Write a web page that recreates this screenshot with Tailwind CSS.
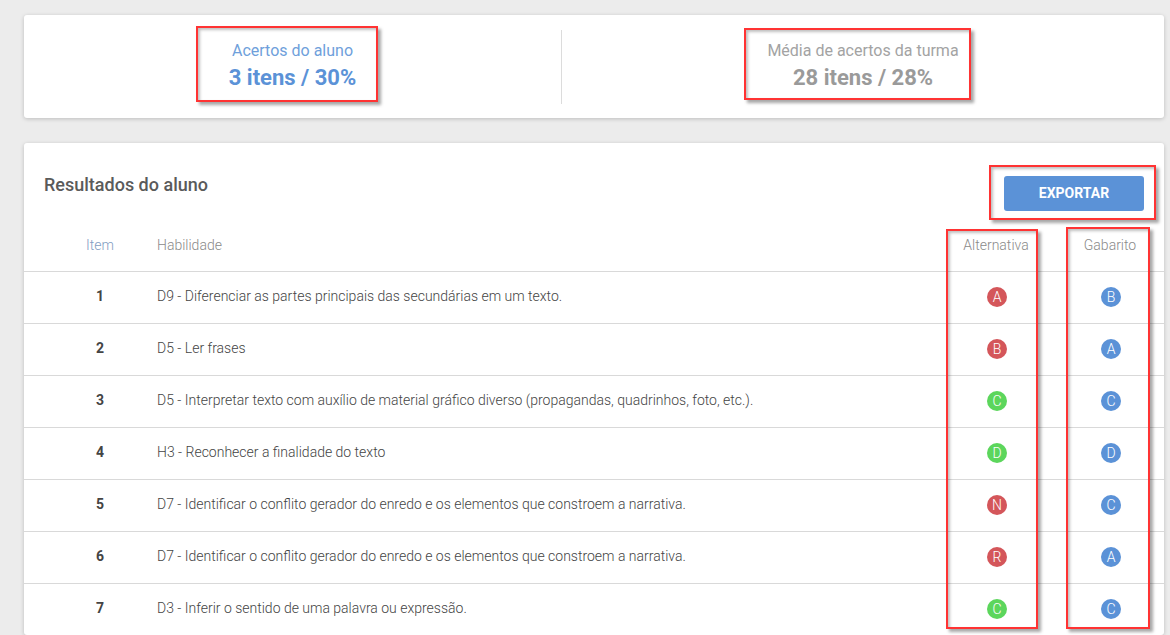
<!DOCTYPE html>
<html lang="pt">
<head>
<meta charset="utf-8">
<script src="https://cdn.jsdelivr.net/npm/@tailwindcss/browser@4"></script>
</head>
<body class="bg-[#ececec] font-['Roboto',sans-serif] h-[635px] overflow-hidden relative">
<div class="pt-[15px] pl-[24px] pr-[6px]">
  <section class="bg-white rounded-[3px] shadow-[0_1px_4px_rgba(0,0,0,0.2)] h-[103px] flex items-center">
    <div class="w-[537px] flex flex-col items-center text-[#5b92d7]">
      <p class="text-[16px] leading-[20px] text-[#6f9fdb]">Acertos do aluno</p>
      <p class="text-[22px] leading-[30px] font-bold mt-[2px]">3 itens / 30%</p>
    </div>
    <div class="w-px h-[74px] bg-[#dcdcdc]"></div>
    <div class="w-[602px] flex flex-col items-center text-[#9a9a9a]">
      <p class="text-[16px] leading-[20px] text-[#a3a3a3]">Média de acertos da turma</p>
      <p class="text-[22px] leading-[30px] font-bold mt-[2px]">28 itens / 28%</p>
    </div>
  </section>
  <section class="bg-white rounded-[3px] shadow-[0_1px_4px_rgba(0,0,0,0.2)] mt-[25px] h-[492px] overflow-hidden">
    <div class="h-[83px] flex justify-between pl-[20px] pr-[20px]">
      <h2 class="text-[18px] leading-[24px] font-medium text-[#5a5a5a] mt-[30px]">Resultados do aluno</h2>
      <button class="w-[140px] h-[35px] mt-[33px] bg-[#5b92d7] rounded-[3px] text-white text-[14px] font-bold">EXPORTAR</button>
    </div>
    <div class="grid grid-cols-[133px_1fr_114px_108px] h-[46px] pb-[7px] items-center text-[14px] font-light text-[#8a8a8a] border-b border-[#d9d9d9]">
      <span class="pl-[19px] text-center text-[#7f9dc2]">Item</span>
      <span>Habilidade</span>
      <span class="pr-[6px] text-center">Alternativa</span>
      <span class="text-center">Gabarito</span>
    </div>
    <div class="grid grid-cols-[133px_1fr_114px_108px] h-[52px] pb-[1px] items-center text-[14px] font-light text-[#444] border-b border-[#d9d9d9]">
      <span class="pl-[19px] pb-[2px] text-center font-bold">1</span>
      <span class="pb-[2px]">D9 - Diferenciar as partes principais das secundárias em um texto.</span>
      <span class="pl-[2px] pr-[6px] flex justify-center"><span class="size-5 rounded-full bg-[#d4565a] text-white flex items-center justify-center">A</span></span>
      <span class="pl-[2px] flex justify-center"><span class="size-5 rounded-full bg-[#5b92d7] text-white flex items-center justify-center">B</span></span>
    </div>
    <div class="grid grid-cols-[133px_1fr_114px_108px] h-[52px] pb-[1px] items-center text-[14px] font-light text-[#444] border-b border-[#d9d9d9]">
      <span class="pl-[19px] pb-[2px] text-center font-bold">2</span>
      <span class="pb-[2px]">D5 - Ler frases</span>
      <span class="pl-[2px] pr-[6px] flex justify-center"><span class="size-5 rounded-full bg-[#d4565a] text-white flex items-center justify-center">B</span></span>
      <span class="pl-[2px] flex justify-center"><span class="size-5 rounded-full bg-[#5b92d7] text-white flex items-center justify-center">A</span></span>
    </div>
    <div class="grid grid-cols-[133px_1fr_114px_108px] h-[52px] pb-[1px] items-center text-[14px] font-light text-[#444] border-b border-[#d9d9d9]">
      <span class="pl-[19px] pb-[2px] text-center font-bold">3</span>
      <span class="pb-[2px]">D5 - Interpretar texto com auxílio de material gráfico diverso (propagandas, quadrinhos, foto, etc.).</span>
      <span class="pl-[2px] pr-[6px] flex justify-center"><span class="size-5 rounded-full bg-[#5cd65c] text-white flex items-center justify-center">C</span></span>
      <span class="pl-[2px] flex justify-center"><span class="size-5 rounded-full bg-[#5b92d7] text-white flex items-center justify-center">C</span></span>
    </div>
    <div class="grid grid-cols-[133px_1fr_114px_108px] h-[52px] pb-[1px] items-center text-[14px] font-light text-[#444] border-b border-[#d9d9d9]">
      <span class="pl-[19px] pb-[2px] text-center font-bold">4</span>
      <span class="pb-[2px]">H3 - Reconhecer a finalidade do texto</span>
      <span class="pl-[2px] pr-[6px] flex justify-center"><span class="size-5 rounded-full bg-[#5cd65c] text-white flex items-center justify-center">D</span></span>
      <span class="pl-[2px] flex justify-center"><span class="size-5 rounded-full bg-[#5b92d7] text-white flex items-center justify-center">D</span></span>
    </div>
    <div class="grid grid-cols-[133px_1fr_114px_108px] h-[52px] pb-[1px] items-center text-[14px] font-light text-[#444] border-b border-[#d9d9d9]">
      <span class="pl-[19px] pb-[2px] text-center font-bold">5</span>
      <span class="pb-[2px]">D7 - Identificar o conflito gerador do enredo e os elementos que constroem a narrativa.</span>
      <span class="pl-[2px] pr-[6px] flex justify-center"><span class="size-5 rounded-full bg-[#d4565a] text-white flex items-center justify-center">N</span></span>
      <span class="pl-[2px] flex justify-center"><span class="size-5 rounded-full bg-[#5b92d7] text-white flex items-center justify-center">C</span></span>
    </div>
    <div class="grid grid-cols-[133px_1fr_114px_108px] h-[52px] pb-[1px] items-center text-[14px] font-light text-[#444] border-b border-[#d9d9d9]">
      <span class="pl-[19px] pb-[2px] text-center font-bold">6</span>
      <span class="pb-[2px]">D7 - Identificar o conflito gerador do enredo e os elementos que constroem a narrativa.</span>
      <span class="pl-[2px] pr-[6px] flex justify-center"><span class="size-5 rounded-full bg-[#d4565a] text-white flex items-center justify-center">R</span></span>
      <span class="pl-[2px] flex justify-center"><span class="size-5 rounded-full bg-[#5b92d7] text-white flex items-center justify-center">A</span></span>
    </div>
    <div class="grid grid-cols-[133px_1fr_114px_108px] h-[52px] pb-[1px] items-center text-[14px] font-light text-[#444] border-b border-[#d9d9d9]">
      <span class="pl-[19px] pb-[2px] text-center font-bold">7</span>
      <span class="pb-[2px]">D3 - Inferir o sentido de uma palavra ou expressão.</span>
      <span class="pl-[2px] pr-[6px] flex justify-center"><span class="size-5 rounded-full bg-[#5cd65c] text-white flex items-center justify-center">C</span></span>
      <span class="pl-[2px] flex justify-center"><span class="size-5 rounded-full bg-[#5b92d7] text-white flex items-center justify-center">C</span></span>
    </div>
  </section>
</div>
<!-- red annotation rectangles overlaid on the screenshot -->
<div class="absolute left-[196px] top-[26px] w-[182px] h-[76px] border-2 border-[#ff3333] shadow-[3px_3px_3px_rgba(0,0,0,0.35),inset_2px_2px_3px_rgba(0,0,0,0.25)]"></div>
<div class="absolute left-[744px] top-[28px] w-[227px] h-[72px] border-2 border-[#ff3333] shadow-[3px_3px_3px_rgba(0,0,0,0.35),inset_2px_2px_3px_rgba(0,0,0,0.25)]"></div>
<div class="absolute left-[989px] top-[165px] w-[167px] h-[55px] border-2 border-[#ff3333] shadow-[3px_3px_3px_rgba(0,0,0,0.35),inset_2px_2px_3px_rgba(0,0,0,0.25)]"></div>
<div class="absolute left-[946px] top-[229px] w-[92px] h-[400px] border-2 border-[#ff3333] shadow-[3px_3px_3px_rgba(0,0,0,0.35),inset_2px_2px_3px_rgba(0,0,0,0.25)]"></div>
<div class="absolute left-[1066px] top-[227px] w-[84px] h-[402px] border-2 border-[#ff3333] shadow-[3px_3px_3px_rgba(0,0,0,0.35),inset_2px_2px_3px_rgba(0,0,0,0.25)]"></div>
</body>
</html>
